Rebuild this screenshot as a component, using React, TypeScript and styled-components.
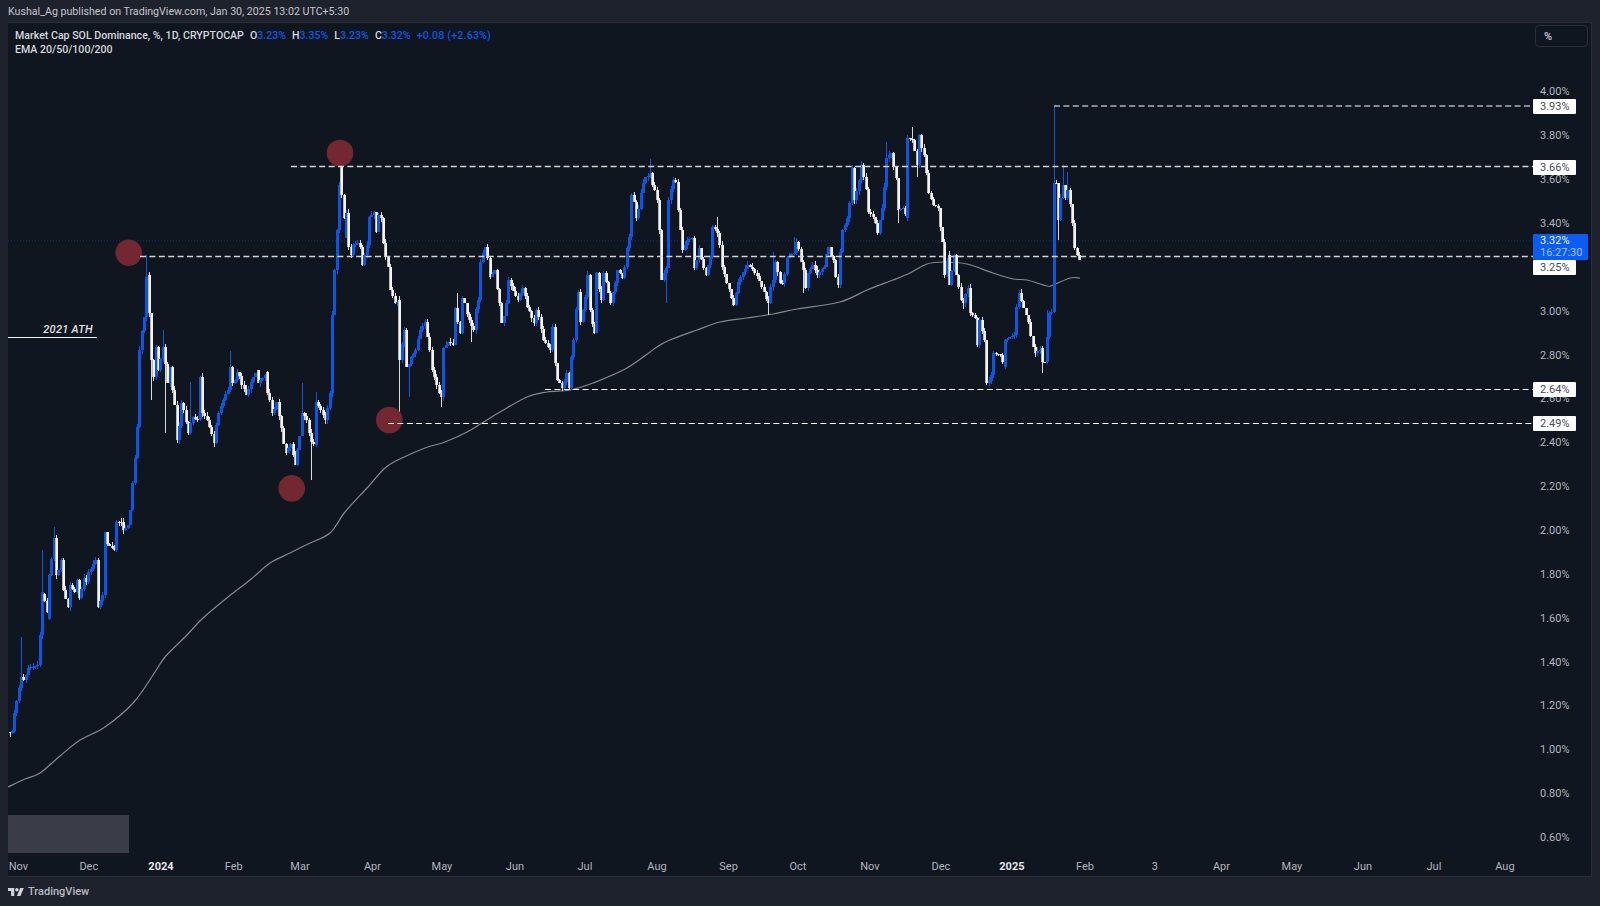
import styled, { createGlobalStyle } from "styled-components";

const GlobalStyle = createGlobalStyle`
  html, body {
    margin: 0;
    padding: 0;
    background: #1e222d;
  }
`;

const BLUE = "#0b57e3";
const BAR_STEP = 2.32;

// close path read off the picture, page coordinates
const PATH: [number, number][] = [
  [9, 732], [10, 733], [13, 730], [15, 713], [18, 688], [22, 677], [24, 680], [28, 668], [31, 667], [35, 666], [38, 665],
  [42, 592], [43, 594], [48, 619], [50, 575], [53, 538], [55, 575], [58, 570], [61, 560], [63, 590], [67, 607],
  [70, 585], [74, 592], [77, 580], [80, 598], [83, 578], [86, 582], [89, 572], [95, 560], [98, 607], [102, 595],
  [105, 532], [108, 544], [113, 550], [116, 522], [120, 522], [124, 530], [127, 525], [130, 510], [133, 483], [137, 427],
  [140, 350], [143, 317], [146, 277], [148, 275], [149, 313], [150, 360], [153, 377], [155, 347], [158, 370],
  [163, 347], [167, 383], [170, 367], [173, 390], [177, 440], [182, 403], [188, 433], [192, 417], [197, 420],
  [200, 377], [203, 413], [210, 427], [213, 443], [218, 413], [227, 390], [230, 367], [233, 383], [238, 372],
  [242, 385], [247, 395], [250, 382], [257, 370], [258, 383], [267, 372], [268, 393], [272, 413], [277, 402],
  [280, 428], [285, 453], [290, 444], [295, 465], [298, 450], [302, 413], [307, 420], [310, 442], [315, 445],
  [316, 402], [320, 410], [325, 420], [328, 408], [332, 373], [333, 315], [335, 270], [337, 230], [338, 185],
  [341, 167], [342, 195], [345, 238], [347, 213], [348, 247], [350, 255], [353, 245], [357, 243], [360, 247],
  [362, 255], [363, 265], [366, 245], [370, 217], [373, 212], [375, 232], [378, 215], [380, 218], [383, 243],
  [387, 267], [390, 290], [395, 303], [399, 300], [400, 360], [403, 330], [407, 367],
  [412, 357], [415, 350], [420, 330], [425, 322], [429, 350], [432, 370], [440, 397], [443, 348], [448, 342],
  [453, 345], [454, 308], [460, 333], [463, 298], [468, 320], [473, 330], [477, 300], [480, 262], [483, 253],
  [486, 247], [490, 277], [495, 270], [498, 303], [502, 323], [507, 303], [508, 280], [517, 300], [522, 288],
  [528, 307], [533, 323], [537, 310], [543, 340], [550, 350], [552, 327], [555, 363], [558, 380], [562, 388],
  [567, 373], [568, 388], [570, 357], [573, 340], [577, 292], [580, 322], [583, 310], [588, 275], [590, 310],
  [593, 333], [597, 273], [600, 300], [604, 273], [610, 303], [615, 283], [618, 270], [623, 278], [628, 237],
  [632, 195], [637, 218], [642, 183], [645, 177], [652, 173], [653, 185], [657, 200], [658, 230], [662, 280],
  [665, 268], [669, 200], [672, 180], [675, 182], [678, 210], [682, 250], [687, 240], [692, 238], [695, 268],
  [698, 248], [705, 275], [710, 257], [713, 227], [718, 233], [722, 267], [727, 283], [733, 305], [738, 282],
  [743, 272], [748, 265], [755, 273], [762, 287], [767, 303], [772, 280], [775, 262], [780, 283], [783, 283],
  [787, 258], [793, 253], [797, 242], [802, 270], [805, 288], [808, 273], [812, 265], [817, 275], [823, 267],
  [828, 247], [832, 260], [837, 285], [840, 252], [843, 230], [847, 218], [850, 203], [852, 168], [855, 200],
  [858, 180], [862, 165], [863, 177], [867, 195], [868, 212], [873, 217], [878, 233], [881, 208], [883, 187],
  [886, 158], [890, 153], [893, 167], [897, 183], [898, 210], [902, 208], [907, 218], [908, 138], [913, 140],
  [916, 165], [918, 135], [923, 155], [927, 173], [928, 193], [933, 205], [938, 208], [940, 227], [943, 242],
  [944, 275], [948, 255], [950, 285], [953, 255], [957, 275], [960, 300], [963, 303], [967, 288], [970, 313],
  [975, 318], [977, 345], [980, 320], [983, 340], [987, 383], [992, 375], [993, 353], [1000, 355], [1004, 367],
  [1005, 340], [1010, 337], [1015, 335], [1017, 307], [1019, 293], [1023, 308], [1028, 322], [1032, 347],
  [1035, 353], [1042, 348], [1043, 362], [1046, 362], [1047, 337], [1048, 313], [1052, 312], [1053, 183],
  [1055, 183], [1058, 220], [1062, 185], [1066, 198], [1068, 190], [1072, 223], [1075, 248], [1078, 260], [1081, 235],
];

// long wicks: x, tip
const SPIKES: [number, number][] = [
  [21, 637], [43, 550], [53, 527], [146, 255], [152, 400], [163, 330], [166, 433], [191, 382], [229, 351],
  [302, 383], [310, 480], [316, 392], [400, 423], [408, 397], [441, 407], [457, 293], [472, 342],
  [650, 159], [667, 303], [718, 217], [769, 315], [773, 252], [794, 237], [803, 293], [837, 287], [887, 142],
  [899, 223], [911, 127], [917, 177], [962, 309], [987, 385], [1041, 373], [1047, 310], [1053, 106],
  [1059, 240], [1062, 165], [1067, 172],
];

const EMA: [number, number][] = [
  [8, 787], [25, 779], [40, 773], [60, 756], [80, 740], [105, 727], [134, 702], [155, 672], [165, 657], [187, 635],
  [203, 618], [228, 597], [250, 580], [270, 563], [290, 553], [308, 544], [330, 533], [345, 512], [367, 488],
  [385, 468], [402, 458], [425, 448], [445, 442], [467, 432], [482, 423], [500, 412], [527, 397], [547, 392],
  [570, 390], [593, 383], [627, 368], [657, 347], [670, 340], [697, 330], [720, 322], [747, 318], [773, 314],
  [797, 309], [840, 302], [867, 290], [893, 280], [910, 273], [927, 264], [943, 262], [967, 264], [993, 273],
  [1013, 279], [1027, 280], [1047, 286], [1053, 285], [1070, 278], [1080, 278],
];

const interp = (x: number) => {
  for (let i = 1; i < PATH.length; i++) {
    if (x <= PATH[i][0]) {
      const [x0, y0] = PATH[i - 1];
      const [x1, y1] = PATH[i];
      return y0 + ((y1 - y0) * (x - x0)) / (x1 - x0 || 1);
    }
  }
  return PATH[PATH.length - 1][1];
};

type Bar = { x: number; top: number; h: number; hi: number; lo: number; up: boolean };

function buildBars() {
  const bars: Bar[] = [];
  let prev = PATH[0][1];
  let seed = 7;
  const rnd = () => {
    seed = (seed * 16807) % 2147483647;
    return seed / 2147483647;
  };
  for (let x = 9.5; x <= 1081; x += BAR_STEP) {
    const inBar = PATH.filter(p => Math.abs(p[0] - x) <= BAR_STEP / 2);
    const close = inBar.length ? inBar[inBar.length - 1][1] : interp(x);
    const ys = inBar.map(p => p[1]);
    const top = Math.round(Math.min(prev, close, ...ys));
    const bottom = Math.round(Math.max(prev, close, ...ys));
    let hi = top - rnd() * 4;
    let lo = bottom + rnd() * 4;
    SPIKES.forEach(([sx, sy]) => {
      if (Math.abs(sx - x) <= BAR_STEP / 2) {
        hi = Math.min(hi, sy);
        lo = Math.max(lo, sy);
      }
    });
    bars.push({
      x: Math.round(x - 1),
      top,
      h: Math.max(bottom - top, 1),
      hi: Math.round(hi),
      lo: Math.round(lo),
      up: close < prev,
    });
    prev = close;
  }
  return bars;
}

const BARS = buildBars();

// catmull-rom through the EMA points
function smoothPath(pts: [number, number][]) {
  let d = `M${pts[0][0]} ${pts[0][1]}`;
  for (let i = 0; i < pts.length - 1; i++) {
    const p0 = pts[Math.max(i - 1, 0)];
    const p1 = pts[i];
    const p2 = pts[i + 1];
    const p3 = pts[Math.min(i + 2, pts.length - 1)];
    const c1x = p1[0] + (p2[0] - p0[0]) / 6;
    const c1y = p1[1] + (p2[1] - p0[1]) / 6;
    const c2x = p2[0] - (p3[0] - p1[0]) / 6;
    const c2y = p2[1] - (p3[1] - p1[1]) / 6;
    d += `C${c1x.toFixed(1)} ${c1y.toFixed(1)} ${c2x.toFixed(1)} ${c2y.toFixed(1)} ${p2[0]} ${p2[1]}`;
  }
  return d;
}

const LEVELS = [
  { y: 106, from: 1054, heavy: false },
  { y: 166.5, from: 291, heavy: true },
  { y: 256.5, from: 140, heavy: true },
  { y: 389.5, from: 545, heavy: false },
  { y: 423.5, from: 388, heavy: false },
];

const CIRCLES = [
  [128.7, 252.7],
  [340, 153],
  [389.3, 420],
  [291.7, 488.3],
];

const PRICE_TICKS = Array.from({ length: 18 }, (_, i) => (4 - i * 0.2).toFixed(2) + "%");

const BADGES = [
  { label: "3.93%", top: 98.5 },
  { label: "3.66%", top: 159.5 },
  { label: "3.25%", top: 259.5 },
  { label: "2.64%", top: 382 },
  { label: "2.49%", top: 416 },
];

const MONTHS: [string, number, boolean?][] = [
  ["Nov", 18.4], ["Dec", 88.8], ["2024", 161, true], ["Feb", 233.7], ["Mar", 300], ["Apr", 372.5], ["May", 442],
  ["Jun", 515], ["Jul", 585], ["Aug", 657], ["Sep", 728.6], ["Oct", 798], ["Nov", 870], ["Dec", 941],
  ["2025", 1012, true], ["Feb", 1085], ["3", 1155], ["Apr", 1221.5], ["May", 1292], ["Jun", 1363], ["Jul", 1434],
  ["Aug", 1505],
];

const Page = styled.div`
  width: 1600px;
  height: 906px;
  display: flex;
  flex-direction: column;
  background: #1e222d;
  font-family: Roboto, "Liberation Sans", sans-serif;
  overflow: hidden;
`;

const TopBar = styled.div`
  height: 22px;
  padding: 1px 0 0 8px;
  box-sizing: border-box;
  display: flex;
  align-items: center;
  font-size: 10.65px;
  color: #c4c6cc;
`;

const Pane = styled.div`
  margin-left: 8px;
  width: 1584px;
  height: 855px;
  box-sizing: border-box;
  display: flex;
  flex-direction: column;
  background: #10161f;
  border: solid #2a2e39;
  border-width: 1px 1px 1px 0;
`;

const Plot = styled.div`
  position: relative;
  flex: 1;
  display: flex;
  min-height: 0;
`;

const ChartSvg = styled.svg`
  display: block;
  flex: 0 0 1525px;
  height: 100%;
`;

const Legend = styled.div`
  position: absolute;
  left: 7px;
  top: 6px;
  font-size: 10.6px;
  line-height: 14px;
  font-weight: 500;
  color: #d6d8de;
`;

const LegendRow = styled.div`
  display: flex;
  align-items: center;
`;

const OhlcGroup = styled.span<{ $wide?: boolean }>`
  margin-left: 6px;
  letter-spacing: ${p => (p.$wide ? "0.2px" : "0")};
`;

const Blue = styled.span`
  color: ${BLUE};
`;

const Note = styled.div`
  position: absolute;
  left: 0;
  top: 298px;
  width: 89px;
  box-sizing: border-box;
  padding: 1px 4px 0 0;
  border-bottom: 1.5px solid #f2f2f2;
  text-align: right;
  font-size: 11px;
  line-height: 15px;
  font-style: italic;
  font-weight: 500;
  letter-spacing: 0.3px;
  color: #e4e4e4;
`;

const Cover = styled.div`
  position: absolute;
  left: 0;
  bottom: 0;
  width: 121px;
  height: 38px;
  background: #3a3d47;
`;

const PriceAxis = styled.div`
  position: relative;
  flex: 1;
  display: flex;
  flex-direction: column;
`;

const ScaleButton = styled.div`
  flex: 0 0 22px;
  margin: 2px 0 0 2px;
  width: 53px;
  box-sizing: border-box;
  padding-left: 8px;
  display: flex;
  align-items: center;
  border: 1px solid #2a2e39;
  border-radius: 4px;
  font-size: 11px;
  font-weight: 500;
  color: #c8cad0;
`;

const PriceTicks = styled.div`
  flex: none;
  margin-top: 23px;
  display: flex;
  flex-direction: column;
`;

const PriceTick = styled.div`
  flex: 0 0 43.86px;
  height: 43.86px;
  padding-left: 7px;
  display: flex;
  align-items: center;
  font-size: 11px;
  color: #b2b5be;
`;

const Badge = styled.div<{ $top: number }>`
  position: absolute;
  left: 0;
  top: ${p => p.$top - 23}px;
  width: 43px;
  height: 15px;
  box-sizing: border-box;
  padding-left: 7px;
  display: flex;
  align-items: center;
  background: #fff;
  border-radius: 1px;
  font-size: 11px;
  color: #4a4d57;
`;

const LastPrice = styled.div`
  position: absolute;
  left: 0;
  top: 211px;
  width: 55px;
  height: 26px;
  box-sizing: border-box;
  padding-left: 7px;
  display: flex;
  flex-direction: column;
  justify-content: center;
  background: #0a5cf5;
  border-radius: 1px;
  font-size: 11px;
  line-height: 12.5px;
  color: #f0f4ff;
`;

const Countdown = styled.span`
  color: #a9c6ff;
`;

const TimeAxis = styled.div`
  height: 23px;
  flex: 0 0 23px;
  box-sizing: border-box;
  padding: 4px 0 0 10.4px;
  display: flex;
  align-items: center;
  font-size: 11px;
  color: #b2b5be;
`;

const Tick = styled.div<{ $gap: number }>`
  flex: 0 0 ${p => p.$gap}px;
  white-space: nowrap;
`;

const TickLabel = styled.span<{ $bold?: boolean }>`
  display: inline-block;
  transform: translateX(-50%);
  font-weight: ${p => (p.$bold ? 700 : 400)};
  color: ${p => (p.$bold ? "#e4e6ea" : "#b2b5be")};
`;

const Footer = styled.div`
  flex: 1;
  padding-left: 8px;
  display: flex;
  align-items: center;
  gap: 4px;
`;

const Brand = styled.span`
  font-size: 11px;
  font-weight: 500;
  color: #b8bbc4;
`;

const Logo = () => (
  <svg width="16" height="12" viewBox="0 2 36 22" fill="#d1d4dc">
    <path d="M14 22H7V11H0V4h14v18zM28 22h-8l7.5-18h8L28 22z" />
    <circle cx="20" cy="8" r="4" />
  </svg>
);

const Candle = ({ bar }: { bar: Bar }) => (
  <>
    <rect x={bar.x + 1} y={bar.hi} width="1" height={bar.lo - bar.hi} fill={bar.up ? BLUE : "#d8d8d8"} />
    <rect x={bar.x} y={bar.top} width="3" height={bar.h} fill={bar.up ? BLUE : "#b8b8b8"} />
    {!bar.up && <rect x={bar.x + 1} y={bar.top} width="1.5" height={bar.h} fill="#f4f4f4" />}
  </>
);

export default function App() {
  return (
    <Page>
      <GlobalStyle />
      <TopBar>Kushal_Ag published on TradingView.com, Jan 30, 2025 13:02 UTC+5:30</TopBar>
      <Pane>
        <Plot>
          <ChartSvg viewBox="8 23 1525 830">
            <line x1="8" y1="241" x2="1533" y2="241" stroke="#12356f" strokeWidth="1" strokeDasharray="1 2" />
            <path d={smoothPath(EMA)} fill="none" stroke="#85888f" strokeWidth="1.2" />
            <g shapeRendering="crispEdges">
              {BARS.map(b => (
                <Candle key={b.x} bar={b} />
              ))}
            </g>
            {CIRCLES.map(([cx, cy]) => (
              <circle key={cx} cx={cx} cy={cy} r="13.3" fill="#722731" />
            ))}
            {LEVELS.map(l => (
              <line
                key={l.y}
                x1={l.from}
                y1={l.y}
                x2="1533"
                y2={l.y}
                stroke={l.heavy ? "#d4d4d4" : "#ffffff"}
                strokeWidth={l.heavy ? 1.5 : 1}
                strokeDasharray="6 3.4"
              />
            ))}
          </ChartSvg>
          <Legend>
            <LegendRow>
              Market Cap SOL Dominance, %, 1D, CRYPTOCAP
              <OhlcGroup>O<Blue>3.23%</Blue></OhlcGroup>
              <OhlcGroup>H<Blue>3.35%</Blue></OhlcGroup>
              <OhlcGroup>L<Blue>3.23%</Blue></OhlcGroup>
              <OhlcGroup>C<Blue>3.32%</Blue></OhlcGroup>
              <OhlcGroup $wide><Blue>+0.08 (+2.63%)</Blue></OhlcGroup>
            </LegendRow>
            <LegendRow>EMA 20/50/100/200</LegendRow>
          </Legend>
          <Note>2021 ATH</Note>
          <Cover />
          <PriceAxis>
            <ScaleButton>%</ScaleButton>
            <PriceTicks>
              {PRICE_TICKS.map(t => (
                <PriceTick key={t}>{t === "3.20%" ? "" : t}</PriceTick>
              ))}
            </PriceTicks>
            <LastPrice>
              <span>3.32%</span>
              <Countdown>16:27:30</Countdown>
            </LastPrice>
            {BADGES.map(b => (
              <Badge key={b.label} $top={b.top}>{b.label}</Badge>
            ))}
          </PriceAxis>
        </Plot>
        <TimeAxis>
          {MONTHS.map(([label, x, bold], i) => (
            <Tick key={i} $gap={i < MONTHS.length - 1 ? MONTHS[i + 1][1] - x : 40}>
              <TickLabel $bold={bold}>{label}</TickLabel>
            </Tick>
          ))}
        </TimeAxis>
      </Pane>
      <Footer>
        <Logo />
        <Brand>TradingView</Brand>
      </Footer>
    </Page>
  );
}
